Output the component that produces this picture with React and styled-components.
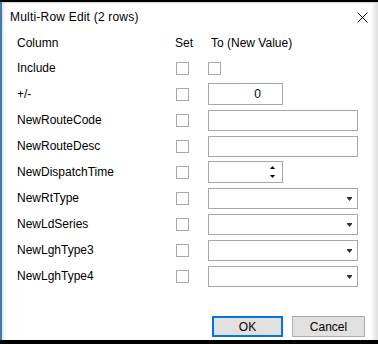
import React from "react";
import styled, { createGlobalStyle } from "styled-components";

const GlobalStyle = createGlobalStyle`
  html, body {
    margin: 0;
    padding: 0;
    background: #000;
  }
  body {
    font-family: "Liberation Sans", Arial, sans-serif;
    font-size: 12px;
    color: #000;
  }
  svg {
    display: block;
  }
`;

const Desktop = styled.div`
  width: 378px;
  height: 344px;
  box-sizing: border-box;
  padding: 2px 0 4px 0;
  display: flex;
  background: #000;
`;

const Edge = styled.div`
  width: 2px;
  background: linear-gradient(to right, #5f7589 0 1px, #2b79c2 1px 2px);
`;

const Window = styled.div`
  flex: 1;
  display: flex;
  flex-direction: column;
  background: #fff;
  border-top: 1px solid #d8d8d8;
  box-shadow: inset 3px 0 3px -1px rgba(0, 0, 0, 0.1),
    inset -6px 0 4px -2px rgba(0, 0, 0, 0.12);
`;

const TitleBar = styled.div`
  height: 28px;
  display: flex;
  align-items: center;
  justify-content: space-between;
  padding: 0 10px 0 8px;
`;

const Title = styled.span`
  font-size: 12px;
  letter-spacing: 0.2px;
`;

const CloseIcon = () => (
  <svg width="11" height="11" viewBox="0 0 11 11">
    <path d="M0.5 0.5 L10.5 10.5 M10.5 0.5 L0.5 10.5" stroke="#000" strokeWidth="1" fill="none" />
  </svg>
);

const Form = styled.div`
  display: grid;
  grid-template-columns: 159px 13px 169px;
  grid-template-rows: 24px;
  grid-auto-rows: 26px;
  padding-left: 15px;
`;

const HeaderCell = styled.div`
  display: flex;
  align-items: center;
  margin-left: ${(p) => p.$shift || 0}px;
  white-space: nowrap;
`;

const Label = styled.div`
  display: flex;
  align-items: center;
  white-space: nowrap;
`;

const CheckCell = styled.div`
  display: flex;
  align-items: center;
`;

const Check = styled.div`
  width: 11px;
  height: 11px;
  border: 1px solid #a8a8a8;
  background: #fff;
`;

const ValueCell = styled.div`
  display: flex;
  align-items: center;
  padding-left: 19px;
`;

const Field = styled.div`
  position: relative;
  flex: none;
  box-sizing: border-box;
  width: ${(p) => p.$w}px;
  height: ${(p) => p.$h || 21}px;
  border: 1px solid #a8a8a8;
  background: #fff;
  display: flex;
  align-items: center;
  justify-content: ${(p) => (p.$right ? "flex-end" : "flex-start")};
  padding-right: ${(p) => (p.$right ? 21 : 0)}px;
`;

const Arrows = styled.div`
  position: absolute;
  right: 7px;
  top: 0;
  bottom: 0;
  display: flex;
  flex-direction: column;
  justify-content: center;
  gap: 6px;
`;

const DropArrow = styled.div`
  position: absolute;
  right: 5px;
  top: 8px;
`;

const UpDown = () => (
  <Arrows>
    <svg width="5" height="3" viewBox="0 0 5 3">
      <path d="M2.5 0 L5 3 L0 3 Z" fill="#000" />
    </svg>
    <svg width="5" height="3" viewBox="0 0 5 3">
      <path d="M0 0 L5 0 L2.5 3 Z" fill="#000" />
    </svg>
  </Arrows>
);

const Combo = () => (
  <Field $w={150}>
    <DropArrow>
      <svg width="5" height="4" viewBox="0 0 5 4">
        <rect x="0" y="0" width="5" height="1" fill="#333" />
        <path d="M0 1 L5 1 L2.5 4 Z" fill="#333" />
      </svg>
    </DropArrow>
  </Field>
);

const Footer = styled.div`
  margin-top: auto;
  display: flex;
  justify-content: flex-end;
  gap: 9px;
  padding: 0 13px 3px 0;
`;

const Button = styled.button`
  box-sizing: border-box;
  width: ${(p) => p.$w}px;
  height: 21px;
  font-family: inherit;
  font-size: 12px;
  color: #000;
  background: #e1e1e1;
  border: ${(p) => (p.$primary ? "2px solid #0078d7" : "1px solid #adadad")};
  padding: 0;
`;

const rows = [
  { label: "Include", kind: "check" },
  { label: "+/-", kind: "number" },
  { label: "NewRouteCode", kind: "text" },
  { label: "NewRouteDesc", kind: "text" },
  { label: "NewDispatchTime", kind: "time" },
  { label: "NewRtType", kind: "combo" },
  { label: "NewLdSeries", kind: "combo" },
  { label: "NewLghType3", kind: "combo" },
  { label: "NewLghType4", kind: "combo" },
];

const renderValue = (kind) => {
  switch (kind) {
    case "check":
      return <Check />;
    case "number":
      return (
        <Field $w={75} $h={22} $right>
          0
        </Field>
      );
    case "text":
      return <Field $w={150} />;
    case "time":
      return (
        <Field $w={75} $h={22}>
          <UpDown />
        </Field>
      );
    default:
      return <Combo />;
  }
};

const App = () => {
  return (
    <>
      <GlobalStyle />
      <Desktop>
        <Edge />
        <Window>
          <TitleBar>
            <Title>Multi-Row Edit (2 rows)</Title>
            <CloseIcon />
          </TitleBar>
          <Form>
            <HeaderCell>Column</HeaderCell>
            <HeaderCell $shift={-1}>Set</HeaderCell>
            <HeaderCell $shift={22}>To (New Value)</HeaderCell>
            {rows.map((r) => (
              <React.Fragment key={r.label}>
                <Label>{r.label}</Label>
                <CheckCell>
                  <Check />
                </CheckCell>
                <ValueCell>{renderValue(r.kind)}</ValueCell>
              </React.Fragment>
            ))}
          </Form>
          <Footer>
            <Button $w={71} $primary>
              OK
            </Button>
            <Button $w={73}>Cancel</Button>
          </Footer>
        </Window>
      </Desktop>
    </>
  );
};

export default App;
